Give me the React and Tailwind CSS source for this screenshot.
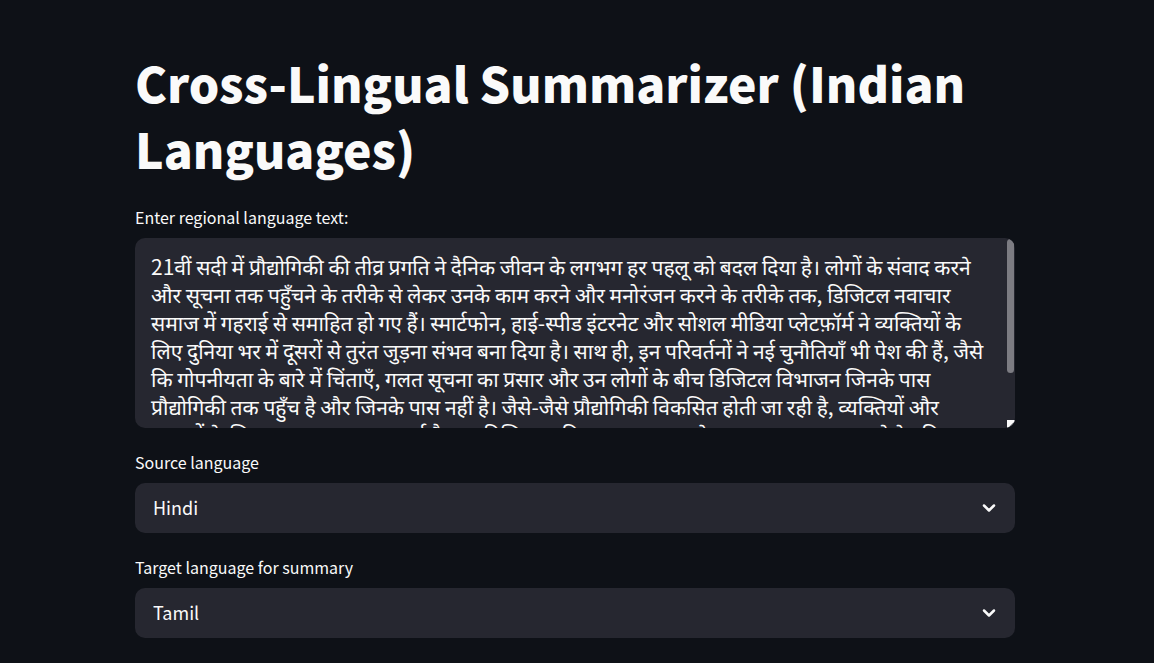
import { ChevronDown } from "lucide-react";

const TEXT =
  "21वीं सदी में प्रौद्योगिकी की तीव्र प्रगति ने दैनिक जीवन के लगभग हर पहलू को बदल दिया है। लोगों के संवाद करने और सूचना तक पहुँचने के तरीके से लेकर उनके काम करने और मनोरंजन करने के तरीके तक, डिजिटल नवाचार समाज में गहराई से समाहित हो गए हैं। स्मार्टफोन, हाई-स्पीड इंटरनेट और सोशल मीडिया प्लेटफ़ॉर्म ने व्यक्तियों के लिए दुनिया भर में दूसरों से तुरंत जुड़ना संभव बना दिया है। साथ ही, इन परिवर्तनों ने नई चुनौतियाँ भी पेश की हैं, जैसे कि गोपनीयता के बारे में चिंताएँ, गलत सूचना का प्रसार और उन लोगों के बीच डिजिटल विभाजन जिनके पास प्रौद्योगिकी तक पहुँच है और जिनके पास नहीं है। जैसे-जैसे प्रौद्योगिकी विकसित होती जा रही है, व्यक्तियों और समाजों के लिए यह समझना महत्वपूर्ण है। इस डिजिटल दुनिया का लाभ उठाने तथा इसका सामना करने हेतु मिलकर काम करना होगा।";

const LANGUAGES = ["Hindi", "Tamil", "Telugu", "Bengali", "Marathi"];

function LanguageSelect({ id, label, value }) {
  return (
    <div className="flex flex-col gap-2">
      <label htmlFor={id} className="text-base leading-[26px]">
        {label}
      </label>
      <div className="grid items-center">
        <select
          id={id}
          defaultValue={value}
          className="col-start-1 row-start-1 h-[50px] w-full appearance-none rounded-[10px] bg-[#262730] px-[18px] pb-[2px] text-lg text-[#fafafa] outline-none"
        >
          {LANGUAGES.map((name) => (
            <option key={name}>{name}</option>
          ))}
        </select>
        <ChevronDown
          aria-hidden="true"
          strokeWidth={3}
          className="pointer-events-none col-start-1 row-start-1 mr-4 size-5 justify-self-end"
        />
      </div>
    </div>
  );
}

export default function App() {
  return (
    <div className="min-h-screen bg-[#0e1117] pt-[49px] pr-7 pb-6 pl-6 font-['Noto_Sans_CJK_SC',sans-serif] text-[#fafafa]">
      <main className="mx-auto flex w-full max-w-[880px] flex-col gap-[21px]">
        <h1 className="pb-[2px] text-5xl leading-[66px] font-black">Cross-Lingual Summarizer (Indian Languages)</h1>
        <div className="flex flex-col gap-2">
          <label htmlFor="source-text" className="text-base leading-[26px]">
            Enter regional language text:
          </label>
          <div className="relative flex overflow-hidden rounded-[10px] bg-[#262730]">
            <textarea
              id="source-text"
              defaultValue={TEXT}
              className="h-[190px] w-full resize-none [scrollbar-width:none] bg-transparent py-[14px] pr-5 pl-4 font-['Noto_Sans_CJK_SC','Noto_Sans',sans-serif] text-[21px] leading-7 outline-none"
            />
            <div aria-hidden="true" className="absolute top-px right-px h-[134px] w-[7px] rounded-full bg-[#7c7c82]" />
            <svg aria-hidden="true" viewBox="0 0 8 8" className="absolute right-0 bottom-0 size-2">
              <path d="M0 0H8V2L2 8H0Z" fill="#fafafa" />
              <path d="M2.500 7L7 2.500M5 7.500L7.500 5" stroke="#55565d" strokeWidth="1" />
            </svg>
          </div>
        </div>
        <LanguageSelect id="source-language" label="Source language" value="Hindi" />
        <LanguageSelect id="target-language" label="Target language for summary" value="Tamil" />
      </main>
    </div>
  );
}
